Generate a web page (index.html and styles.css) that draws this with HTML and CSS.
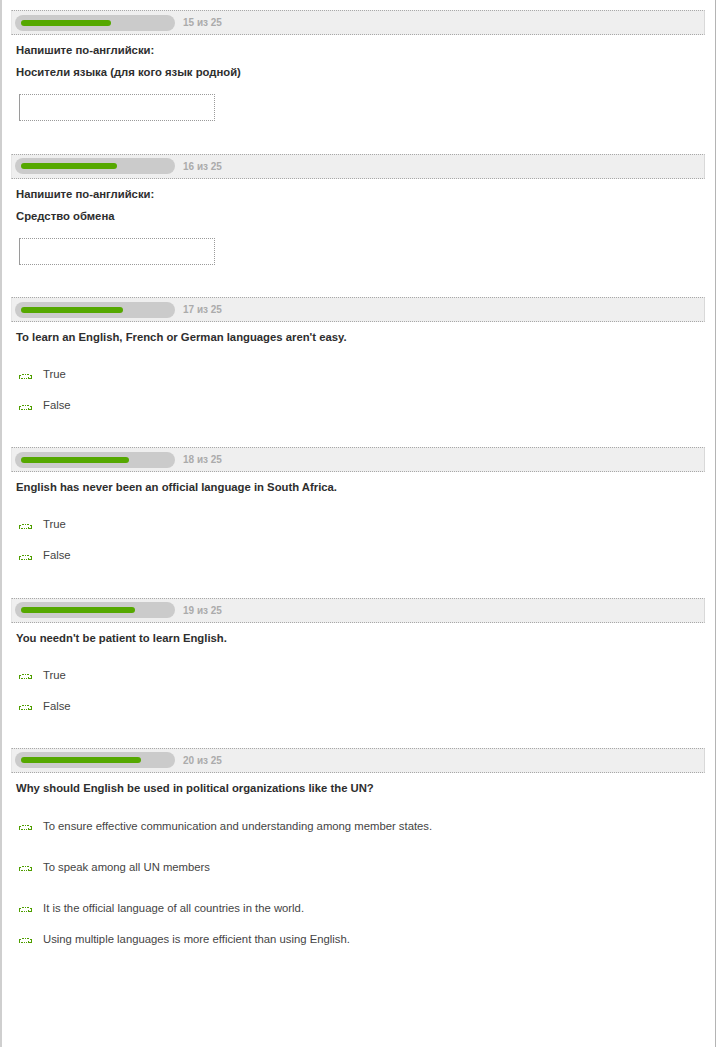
FILE: index.html
```html
<!DOCTYPE html>
<html lang="ru">
<head>
<meta charset="utf-8">
<title>Тест</title>
<link rel="stylesheet" href="styles.css">
</head>
<body>
<div class="page">

  <section class="q q-input">
    <div class="qhead">
      <div class="track"><div class="fill" style="width:90px"></div></div>
      <span class="count">15 из 25</span>
    </div>
    <p class="qtext">Напишите по-английски:</p>
    <p class="qtext second">Носители языка (для кого язык родной)</p>
    <input class="answer" type="text">
  </section>

  <section class="q q-input">
    <div class="qhead">
      <div class="track"><div class="fill" style="width:96px"></div></div>
      <span class="count">16 из 25</span>
    </div>
    <p class="qtext">Напишите по-английски:</p>
    <p class="qtext second">Средство обмена</p>
    <input class="answer" type="text">
  </section>

  <section class="q q-choice">
    <div class="qhead">
      <div class="track"><div class="fill" style="width:102px"></div></div>
      <span class="count">17 из 25</span>
    </div>
    <p class="qtext">To learn an English, French or German languages aren't easy.</p>
    <ul class="opts">
      <li class="opt first"><svg class="ico" viewBox="0 0 15 6" width="15" height="6"><path d="M1 2h2M4 1h2M7 1h1M9 1h2M12 2h2M1 3h1M13 3h1M1 4h1M3 5h2M1 5h1M6 5h1M8 5h1M10 4h1M10 5h4M13 4h1" fill="none" stroke="#4f9e00" stroke-width="1" shape-rendering="crispEdges"/></svg><span>True</span></li>
      <li class="opt"><svg class="ico" viewBox="0 0 15 6" width="15" height="6"><path d="M1 2h2M4 1h2M7 1h1M9 1h2M12 2h2M1 3h1M13 3h1M1 4h1M3 5h2M1 5h1M6 5h1M8 5h1M10 4h1M10 5h4M13 4h1" fill="none" stroke="#4f9e00" stroke-width="1" shape-rendering="crispEdges"/></svg><span>False</span></li>
    </ul>
  </section>

  <section class="q q-choice">
    <div class="qhead">
      <div class="track"><div class="fill" style="width:108px"></div></div>
      <span class="count">18 из 25</span>
    </div>
    <p class="qtext">English has never been an official language in South Africa.</p>
    <ul class="opts">
      <li class="opt first"><svg class="ico" viewBox="0 0 15 6" width="15" height="6"><path d="M1 2h2M4 1h2M7 1h1M9 1h2M12 2h2M1 3h1M13 3h1M1 4h1M3 5h2M1 5h1M6 5h1M8 5h1M10 4h1M10 5h4M13 4h1" fill="none" stroke="#4f9e00" stroke-width="1" shape-rendering="crispEdges"/></svg><span>True</span></li>
      <li class="opt"><svg class="ico" viewBox="0 0 15 6" width="15" height="6"><path d="M1 2h2M4 1h2M7 1h1M9 1h2M12 2h2M1 3h1M13 3h1M1 4h1M3 5h2M1 5h1M6 5h1M8 5h1M10 4h1M10 5h4M13 4h1" fill="none" stroke="#4f9e00" stroke-width="1" shape-rendering="crispEdges"/></svg><span>False</span></li>
    </ul>
  </section>

  <section class="q q-choice">
    <div class="qhead">
      <div class="track"><div class="fill" style="width:114px"></div></div>
      <span class="count">19 из 25</span>
    </div>
    <p class="qtext">You needn't be patient to learn English.</p>
    <ul class="opts">
      <li class="opt first"><svg class="ico" viewBox="0 0 15 6" width="15" height="6"><path d="M1 2h2M4 1h2M7 1h1M9 1h2M12 2h2M1 3h1M13 3h1M1 4h1M3 5h2M1 5h1M6 5h1M8 5h1M10 4h1M10 5h4M13 4h1" fill="none" stroke="#4f9e00" stroke-width="1" shape-rendering="crispEdges"/></svg><span>True</span></li>
      <li class="opt"><svg class="ico" viewBox="0 0 15 6" width="15" height="6"><path d="M1 2h2M4 1h2M7 1h1M9 1h2M12 2h2M1 3h1M13 3h1M1 4h1M3 5h2M1 5h1M6 5h1M8 5h1M10 4h1M10 5h4M13 4h1" fill="none" stroke="#4f9e00" stroke-width="1" shape-rendering="crispEdges"/></svg><span>False</span></li>
    </ul>
  </section>

  <section class="q q-choice last">
    <div class="qhead">
      <div class="track"><div class="fill" style="width:120px"></div></div>
      <span class="count">20 из 25</span>
    </div>
    <p class="qtext">Why should English be used in political organizations like the UN?</p>
    <ul class="opts">
      <li class="opt first wide"><svg class="ico" viewBox="0 0 15 6" width="15" height="6"><path d="M1 2h2M4 1h2M7 1h1M9 1h2M12 2h2M1 3h1M13 3h1M1 4h1M3 5h2M1 5h1M6 5h1M8 5h1M10 4h1M10 5h4M13 4h1" fill="none" stroke="#4f9e00" stroke-width="1" shape-rendering="crispEdges"/></svg><span>To ensure effective communication and understanding among member states.</span></li>
      <li class="opt wide"><svg class="ico" viewBox="0 0 15 6" width="15" height="6"><path d="M1 2h2M4 1h2M7 1h1M9 1h2M12 2h2M1 3h1M13 3h1M1 4h1M3 5h2M1 5h1M6 5h1M8 5h1M10 4h1M10 5h4M13 4h1" fill="none" stroke="#4f9e00" stroke-width="1" shape-rendering="crispEdges"/></svg><span>To speak among all UN members</span></li>
      <li class="opt wide"><svg class="ico" viewBox="0 0 15 6" width="15" height="6"><path d="M1 2h2M4 1h2M7 1h1M9 1h2M12 2h2M1 3h1M13 3h1M1 4h1M3 5h2M1 5h1M6 5h1M8 5h1M10 4h1M10 5h4M13 4h1" fill="none" stroke="#4f9e00" stroke-width="1" shape-rendering="crispEdges"/></svg><span>It is the official language of all countries in the world.</span></li>
      <li class="opt"><svg class="ico" viewBox="0 0 15 6" width="15" height="6"><path d="M1 2h2M4 1h2M7 1h1M9 1h2M12 2h2M1 3h1M13 3h1M1 4h1M3 5h2M1 5h1M6 5h1M8 5h1M10 4h1M10 5h4M13 4h1" fill="none" stroke="#4f9e00" stroke-width="1" shape-rendering="crispEdges"/></svg><span>Using multiple languages is more efficient than using English.</span></li>
    </ul>
  </section>

</div>
</body>
</html>
```

FILE: styles.css
```css
html, body {
  margin: 0;
  padding: 0;
  background: #fff;
}

body {
  font-family: "Liberation Sans", Arial, sans-serif;
  font-size: 11.3px;
  color: #333;
}

.page {
  box-sizing: border-box;
  width: 716px;
  min-height: 1047px;
  border-left: 2px solid #cfcfcf;
  border-right: 1px solid #b4b4b4;
  padding-top: 10px;
}

.q {
  margin: 0;
}

.qhead {
  box-sizing: border-box;
  height: 25px;
  margin: 0 10px 0 9px;
  background: #efefef;
  border-top: 1px dotted #a8a8a8;
  border-bottom: 1px dotted #a8a8a8;
  border-left: 1px solid #e6e6e6;
  border-right: 1px solid #d9d9d9;
  display: flex;
  align-items: center;
  padding-left: 3px;
}

.track {
  width: 160px;
  height: 16px;
  border-radius: 8px;
  background: #cbcbcb;
  display: flex;
  align-items: center;
  padding-left: 6px;
  box-sizing: border-box;
}

.fill {
  height: 6px;
  border-radius: 3px;
  background: #55a800;
}

.count {
  margin-left: 8px;
  font-size: 10px;
  font-weight: bold;
  color: #ababab;
}

.qtext {
  margin: 7px 0 0 14px;
  line-height: 16px;
  font-weight: bold;
  color: #2e2e2e;
}

.qtext.second {
  margin-top: 6px;
}

.answer {
  display: block;
  box-sizing: border-box;
  width: 196px;
  height: 27px;
  margin: 14px 0 0 17px;
  border: 1px dotted #9a9a9a;
  border-left-style: solid;
  background: #fff;
  padding: 0;
  outline: none;
}

.q-input {
  padding-bottom: 32.5px;
}

.opts {
  list-style: none;
  margin: 0;
  padding: 0;
}

.opt {
  display: flex;
  align-items: center;
  margin: 15px 0 0 16px;
  line-height: 16px;
  color: #444;
}

.opt.first {
  margin-top: 21px;
}

.opt.wide + .opt {
  margin-top: 25px;
}

.opt.wide + .opt:not(.wide) {
  margin-top: 15px;
}

.q-choice .opt.first.wide {
  margin-top: 22px;
}

.ico {
  display: block;
  flex: none;
  margin: 3px 10px 0 0;
}

.q-choice {
  padding-bottom: 34.3px;
}
```
